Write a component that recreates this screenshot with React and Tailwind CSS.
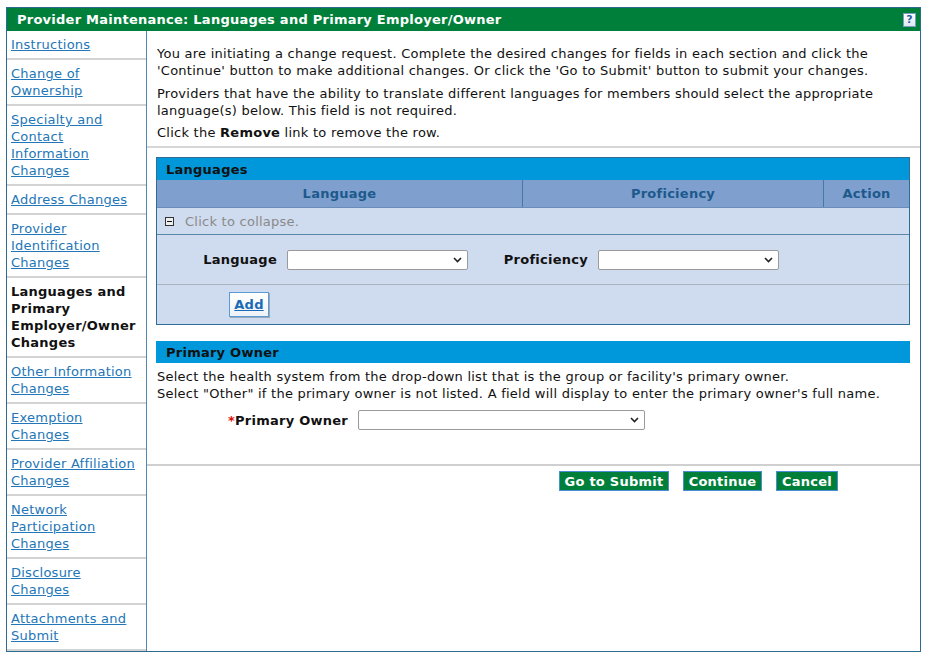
import React from 'react';

const navItems = [
  { lines: ['Instructions'] },
  { lines: ['Change of', 'Ownership'] },
  { lines: ['Specialty and', 'Contact', 'Information', 'Changes'] },
  { lines: ['Address Changes'] },
  { lines: ['Provider', 'Identification', 'Changes'] },
  { lines: ['Languages and', 'Primary', 'Employer/Owner', 'Changes'], active: true },
  { lines: ['Other Information', 'Changes'] },
  { lines: ['Exemption', 'Changes'] },
  { lines: ['Provider Affiliation', 'Changes'] },
  { lines: ['Network', 'Participation', 'Changes'] },
  { lines: ['Disclosure', 'Changes'] },
  { lines: ['Attachments and', 'Submit'] },
];

function Select({ width }) {
  return (
    <div className={`relative h-[20px] ${width}`}>
      <select className="appearance-none w-full h-full bg-white border border-[#9a9a9a] rounded-[2px] text-[13px] px-1 outline-none">
        <option value=""></option>
      </select>
      <svg
        className="absolute right-[6px] top-[7px] pointer-events-none"
        width="9"
        height="6"
        viewBox="0 0 9 6"
      >
        <path d="M1 1 L4.5 4.5 L8 1" fill="none" stroke="#222" strokeWidth="1.6" />
      </svg>
    </div>
  );
}

export default function App() {
  return (
    <div className="font-['Verdana','DejaVu_Sans',sans-serif] text-[13px] leading-[17px] tracking-[0.25px] text-[#111] bg-white min-h-[653px] pt-[7px] pl-[6px]">
      <div className="w-[915px] border border-[#2c6b8f]">
        {/* Title bar */}
        <div className="h-[23px] bg-[#007f3b] flex items-center justify-between pl-[10px] pr-[4px]">
          <span className="text-white font-bold">Provider Maintenance: Languages and Primary Employer/Owner</span>
          <span className="w-[13px] h-[14px] bg-gradient-to-b from-white to-[#dfe8f2] border border-[#7d9cc0] flex items-center justify-center text-[11px] leading-none tracking-normal font-bold text-[#2a5fa8]">
            ?
          </span>
        </div>

        <div className="flex">
          {/* Sidebar */}
          <div className="w-[140px] shrink-0 border-r border-[#4f88b0]">
            {navItems.map((item, i) => (
              <div key={i} className="pl-[4px] pr-[1px] py-[5px] border-b-2 border-[#d3d3d3]">
                {item.lines.map((line, j) =>
                  item.active ? (
                    <div key={j} className="font-bold whitespace-nowrap text-[#111]">
                      {line}
                    </div>
                  ) : (
                    <div key={j} className="whitespace-nowrap">
                      <a href="#" className="text-[#2376b7] underline">
                        {line}
                      </a>
                    </div>
                  )
                )}
              </div>
            ))}
          </div>

          {/* Main */}
          <div className="flex-1">
            <div className="px-[10px] pt-[14px] pb-[5px]">
              <p>
                You are initiating a change request. Complete the desired changes for fields in each section and click the
                <br />
                'Continue' button to make additional changes. Or click the 'Go to Submit' button to submit your changes.
              </p>
              <p className="mt-[6px]">
                Providers that have the ability to translate different languages for members should select the appropriate
                <br />
                language(s) below. This field is not required.
              </p>
              <p className="mt-[5px]">
                Click the <b>Remove</b> link to remove the row.
              </p>
            </div>
            <div className="h-[2px] bg-[#d6d6d6]" />

            {/* Languages */}
            <div className="mx-[9px] mt-[9px] border border-[#2e6e96] w-[754px]">
              <div className="h-[22px] bg-[#0098da] flex items-center pl-[9px] font-bold text-[#111]">Languages</div>
              <div className="grid grid-cols-[366px_301px_1fr] h-[28px] bg-[#7f9fcf] border-b border-[#6a8cb8] font-bold text-[#1c5a8c]">
                <div className="flex items-center justify-center border-r border-[#4a78a6]">Language</div>
                <div className="flex items-center justify-center border-r border-[#4a78a6]">Proficiency</div>
                <div className="flex items-center justify-center">Action</div>
              </div>
              <div className="h-[27px] bg-[#cfdbee] border-b border-[#5a86ab] flex items-center pl-[8px] gap-[11px] text-[#8a8a8a]">
                <span className="w-[9px] h-[9px] border border-[#333] bg-[#eeeeee] flex items-center justify-center">
                  <span className="w-[5px] h-[1px] bg-[#111]" />
                </span>
                <span>Click to collapse.</span>
              </div>
              <div className="h-[50px] bg-[#cfdbee] border-b border-[#aab4bf] flex items-center">
                <div className="w-[120px] text-right font-bold">Language</div>
                <div className="ml-[10px]">
                  <Select width="w-[181px]" />
                </div>
                <div className="w-[120px] text-right font-bold">Proficiency</div>
                <div className="ml-[10px]">
                  <Select width="w-[181px]" />
                </div>
              </div>
              <div className="h-[39px] bg-[#cfdbee] flex items-center pl-[72px]">
                <button className="h-[25px] w-[40px] bg-gradient-to-b from-white to-[#eef3f8] border border-[#5b9bd5] shadow-[1px_1px_0_#9aa9b8] font-bold text-[#1a6bb5] underline">
                  Add
                </button>
              </div>
            </div>

            {/* Primary Owner */}
            <div className="mx-[9px] mt-[16px] w-[754px] h-[22px] bg-[#0098da] flex items-center pl-[10px] font-bold text-[#111]">
              Primary Owner
            </div>
            <div className="px-[10px] pt-[5px]">
              <p>Select the health system from the drop-down list that is the group or facility's primary owner.</p>
              <p>Select "Other" if the primary owner is not listed. A field will display to enter the primary owner's full name.</p>
            </div>
            <div className="flex items-center mt-[8px] pl-[79px]">
              <div className="w-[122px] text-right font-bold">
                <span className="text-[#e01010]">*</span>Primary Owner
              </div>
              <div className="ml-[10px]">
                <Select width="w-[287px]" />
              </div>
            </div>
            <div className="h-[2px] bg-[#d0d0d0] mt-[34px]" />
            <div className="flex justify-end gap-[14px] pr-[82px] pt-[5px]">
              <button className="h-[20px] w-[110px] bg-[#007f3b] border border-[#4a8fd6] text-white font-bold">Go to Submit</button>
              <button className="h-[20px] w-[79px] bg-[#007f3b] border border-[#4a8fd6] text-white font-bold">Continue</button>
              <button className="h-[20px] w-[62px] bg-[#007f3b] border border-[#4a8fd6] text-white font-bold">Cancel</button>
            </div>
          </div>
        </div>
      </div>
    </div>
  );
}
